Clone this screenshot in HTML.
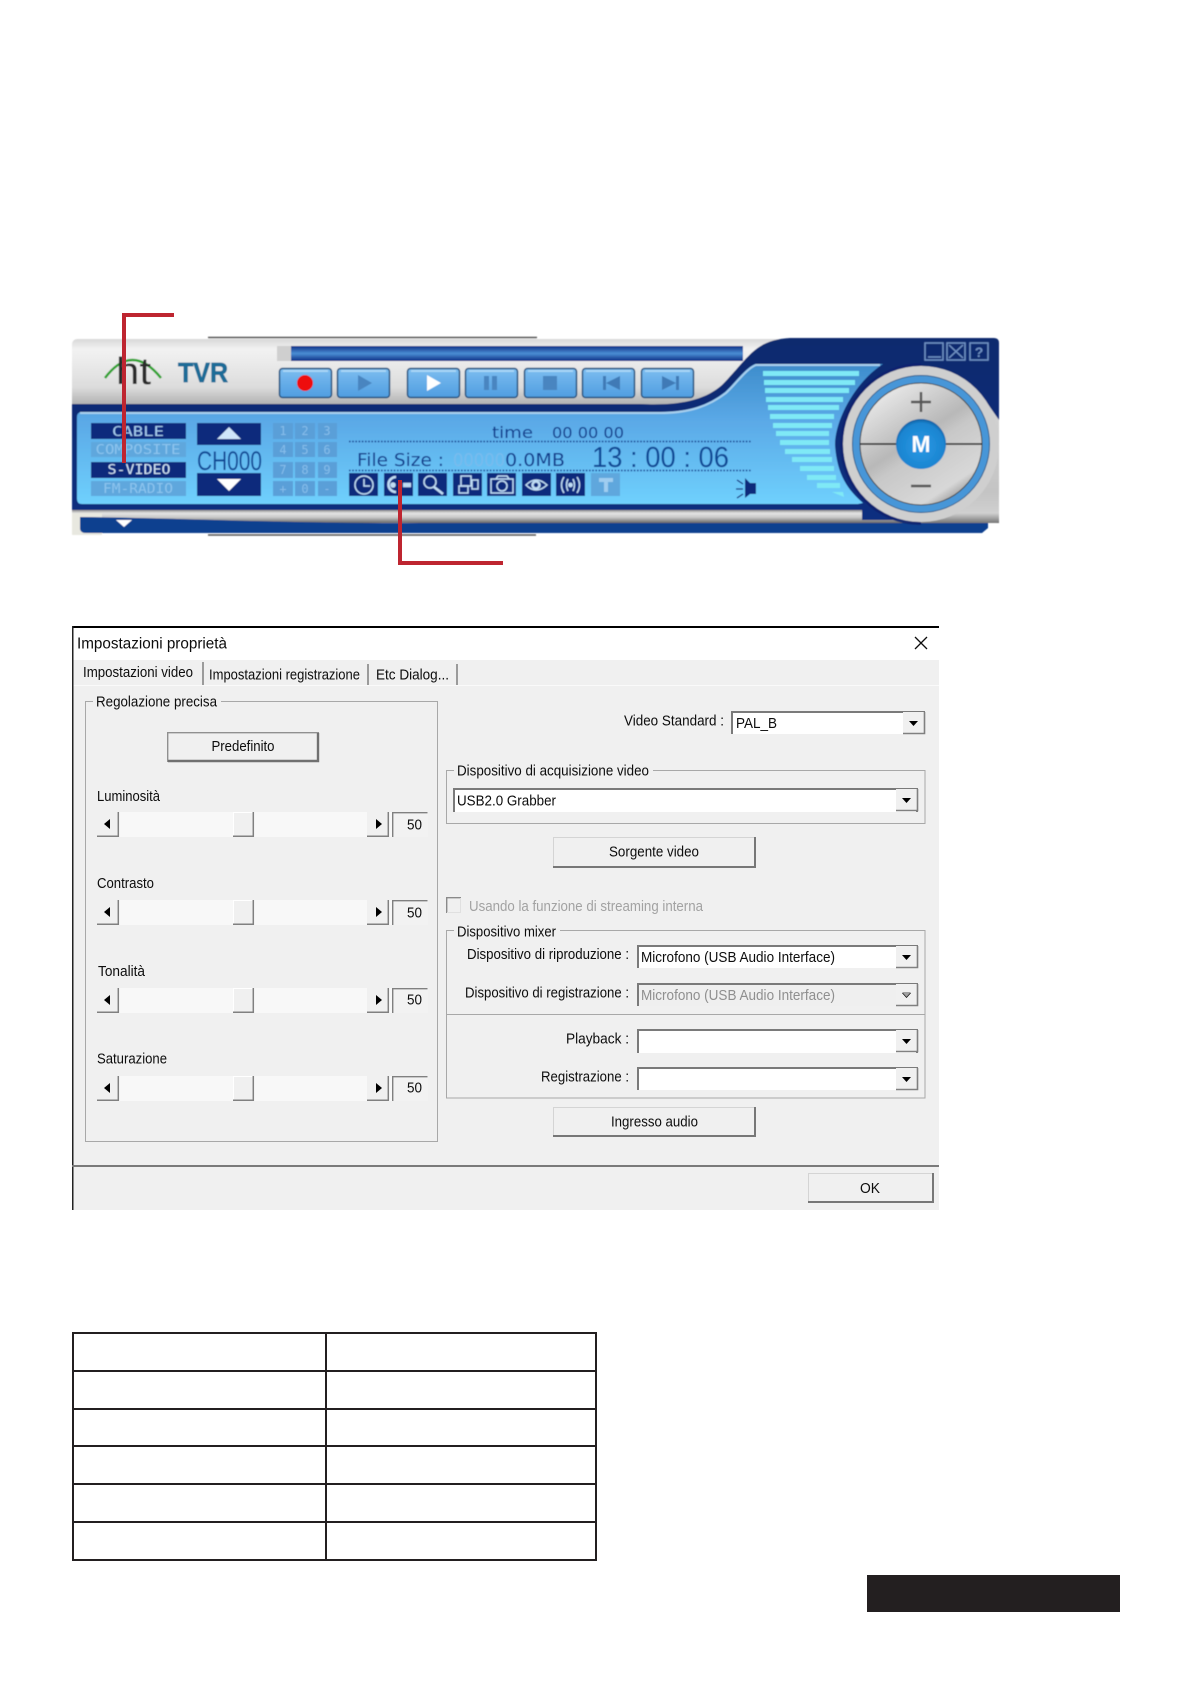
<!DOCTYPE html>
<html><head><meta charset="utf-8"><style>
html,body{margin:0;padding:0;background:#fff}
svg{display:block}
.t{font-family:"Liberation Sans",sans-serif;font-size:14.5px;fill:#0c0c0c;transform:translateY(-0.8px)}
.m{font-family:"DejaVu Sans Mono","Liberation Mono",monospace;font-size:13px}
.s{font-family:"DejaVu Sans","Liberation Sans",sans-serif;fill:#0b3a8c}
</style></head><body>
<svg width="1191" height="1684" viewBox="0 0 1191 1684" xmlns="http://www.w3.org/2000/svg">
<defs>
<linearGradient id="sil" x1="0" y1="0" x2="0" y2="1"><stop offset="0" stop-color="#d8d8d8"/><stop offset=".15" stop-color="#f2f2f2"/><stop offset=".7" stop-color="#dcdcdc"/><stop offset="1" stop-color="#a8a8a8"/></linearGradient>
<linearGradient id="sil2" x1="0" y1="0" x2="0" y2="1"><stop offset="0" stop-color="#777"/><stop offset=".3" stop-color="#e4e4e4"/><stop offset=".6" stop-color="#c8c8c8"/><stop offset="1" stop-color="#666"/></linearGradient>
<linearGradient id="sil3" x1="0" y1="0" x2="0" y2="1"><stop offset="0" stop-color="#d4d4d4"/><stop offset=".75" stop-color="#c4c4c4"/><stop offset=".92" stop-color="#d0d0d0"/><stop offset="1" stop-color="#777"/></linearGradient>
<linearGradient id="nav" x1="0" y1="0" x2="0" y2="1"><stop offset="0" stop-color="#0c2a6e"/><stop offset="1" stop-color="#0b2f80"/></linearGradient>
<linearGradient id="pan" gradientUnits="userSpaceOnUse" x1="0" y1="363" x2="0" y2="503"><stop offset="0" stop-color="#3d8ccb"/><stop offset=".4" stop-color="#5aa8e6"/><stop offset="1" stop-color="#6fd0fd"/></linearGradient>
<linearGradient id="prog" x1="0" y1="0" x2="0" y2="1"><stop offset="0" stop-color="#0e2f86"/><stop offset=".5" stop-color="#4a8fd4"/><stop offset="1" stop-color="#0e2f86"/></linearGradient>
<linearGradient id="btn" x1="0" y1="0" x2="0" y2="1"><stop offset="0" stop-color="#7dbdf0"/><stop offset="1" stop-color="#4f9de0"/></linearGradient>
<linearGradient id="disc" gradientUnits="userSpaceOnUse" x1="880" y1="383" x2="960" y2="505"><stop offset="0" stop-color="#f0f0f0"/><stop offset=".45" stop-color="#b8b8b8"/><stop offset=".55" stop-color="#c8c8c8"/><stop offset=".85" stop-color="#d8d8d8"/><stop offset="1" stop-color="#808080"/></linearGradient>
<radialGradient id="mb" cx=".5" cy=".55" r=".55"><stop offset="0" stop-color="#2a9ae6"/><stop offset=".85" stop-color="#1a84d0"/><stop offset="1" stop-color="#0c5c9c"/></radialGradient>
<clipPath id="lh"><rect x="800" y="330" width="121" height="200"/></clipPath>
<filter id="b" x="-2%" y="-2%" width="104%" height="104%"><feGaussianBlur stdDeviation="0.55"/></filter>
<filter id="b2" x="-2%" y="-2%" width="104%" height="104%"><feGaussianBlur stdDeviation="0.32"/></filter>
<g id="pb"><rect x=".5" y=".5" width="52" height="29" rx="3" fill="url(#btn)" stroke="#24527f" stroke-width="1.5"/><rect x="4" y="2" width="45" height="2" fill="#a9d6f6"/></g>
<g id="ca"><rect width="21" height="22" fill="#f0f0f0"/><path d="M0,21.5H21.5V0" fill="none" stroke="#808080" stroke-width="1.6"/><path d="M6,9h9l-4.5,5z" fill="#000"/></g>
<g id="sc">
<rect x="97" y="0" width="331" height="25" fill="#f8f8f8"/>
<rect x="97" y="0" width="22" height="25" fill="#f0f0f0"/><path d="M97,24.3H118.3V0" fill="none" stroke="#808080" stroke-width="1.5"/><path d="M110,7v10l-6,-5z" fill="#000"/>
<rect x="233" y="0" width="21" height="25" fill="#f0f0f0"/><path d="M233.5,24V.5H253" fill="none" stroke="#fff"/><path d="M233,24.3H253.3V0" fill="none" stroke="#808080" stroke-width="1.5"/>
<rect x="367" y="0" width="22" height="25" fill="#f0f0f0"/><path d="M367,24.3H388.3V0" fill="none" stroke="#808080" stroke-width="1.5"/><path d="M376,7v10l6,-5z" fill="#000"/>
<rect x="392" y="0" width="36" height="25" fill="#f2f2f2"/><path d="M392.7,25V.7H427.5" fill="none" stroke="#808080" stroke-width="1.4"/>
</g>
</defs>
<rect width="1191" height="1684" fill="#fff"/>

<g filter="url(#b)">
<path d="M208,337.5H537M208,535H536" stroke="#555" stroke-width="1.5"/>
<!-- silver top -->
<path d="M78,339H795V408H72V345Q72,339 78,339Z" fill="url(#sil)"/>
<rect x="72" y="509" width="927" height="14" fill="url(#sil2)"/>
<rect x="72" y="513" width="30" height="22" fill="#e8e8e0"/>
<path d="M80,517C180,518 300,524 420,523H988V528L982,533H86Q80,533 80,528Z" fill="#0b3f8f"/>
<path d="M116,520h16l-8,7z" fill="#fff"/>
<!-- navy -->
<path d="M72,404H640C680,406 705,400 722,385C735,372 745,358 755,350C765,342 775,339 790,338H994Q999,338 999,343V520H862V510H72Z" fill="url(#nav)"/>
<!-- panel -->
<path d="M82,412H660C690,412 708,405 725,392C735,383 745,368 755,364H883C855,382 835,420 835,445C837,475 848,490 863,503L858,504H82Q77,504 77,499V417Q77,412 82,412Z" fill="url(#pan)"/>
<path d="M80,413H660C690,413 709,406 726,393C736,384 746,369 756,365H880" fill="none" stroke="#a8d0ee" stroke-width="2"/>
<!-- volume bars -->
<g fill="#7fe9f6">
<rect x="763" y="371" width="96" height="5"/><rect x="764" y="380" width="91" height="5"/><rect x="765" y="388" width="84" height="5"/><rect x="766" y="397" width="77" height="5"/><rect x="768" y="405" width="71" height="5"/><rect x="770" y="414" width="64" height="5"/><rect x="773" y="423" width="59" height="5"/><rect x="776" y="431" width="53" height="5"/><rect x="780" y="440" width="49" height="5"/><rect x="785" y="449" width="45" height="5"/><rect x="792" y="457" width="40" height="5"/><rect x="800" y="466" width="34" height="5"/><rect x="807" y="475" width="29" height="5"/><rect x="817" y="483" width="23" height="5"/><path d="M832,492H843L844,497Z"/>
</g>
<!-- right silver + knob -->
<circle cx="921" cy="444" r="81" fill="#0a2470" opacity=".9" clip-path="url(#lh)"/>
<path d="M921,444L985,400L999,420V519Q999,523 995,523H921Z" fill="url(#sil3)"/>
<circle cx="921" cy="444" r="78" fill="#cfcfcf"/>
<circle cx="921" cy="444" r="64.5" fill="none" stroke="#4696d8" stroke-width="7"/>
<circle cx="921" cy="444" r="68.5" fill="none" stroke="#235a8e" stroke-width="1"/>
<circle cx="921" cy="444" r="61" fill="url(#disc)" stroke="#444" stroke-width="1"/>
<path d="M860,444H982" stroke="#111" stroke-width="1.5"/>
<circle cx="921" cy="444" r="25" fill="url(#mb)"/>
<path d="M911,402H931M921,392V412M911,486H931" stroke="#555" stroke-width="2.4"/>
<text x="921" y="452" text-anchor="middle" font-family="Liberation Sans,sans-serif" font-weight="700" font-size="23" fill="#fff">M</text>
<!-- window buttons -->
<g fill="none" stroke="#6f92c4" stroke-width="1.5"><rect x="925" y="343" width="18" height="17"/><rect x="947" y="343" width="18" height="17"/><rect x="970" y="343" width="18" height="17"/><path d="M928,357H941M949,345L963,358M963,345L949,358"/></g>
<text x="979" y="357" text-anchor="middle" font-family="Liberation Sans,sans-serif" font-weight="700" font-size="14" fill="#6f92c4">?</text>
<!-- progress -->
<rect x="277" y="346" width="466" height="15" fill="url(#prog)"/><rect x="277" y="346" width="14" height="15" fill="#cfcfcf"/>
<!-- logo -->
<path d="M105,378Q132,342 161,378" fill="none" stroke="#2fa32f" stroke-width="2.5"/>
<text x="116" y="384" textLength="35" lengthAdjust="spacingAndGlyphs" font-family="Liberation Sans,sans-serif" font-size="38" fill="#2b2b2b">ht</text>
<text x="178" y="382" textLength="50" lengthAdjust="spacingAndGlyphs" font-family="Liberation Sans,sans-serif" font-weight="700" font-size="28" fill="#1f6c97" stroke="#1f6c97" stroke-width=".7">TVR</text>
<!-- play buttons -->
<use href="#pb" x="279" y="368"/><use href="#pb" x="337" y="368"/><use href="#pb" x="407" y="368"/><use href="#pb" x="465" y="368"/><use href="#pb" x="524" y="368"/><use href="#pb" x="582" y="368"/><use href="#pb" x="641" y="368"/>
<circle cx="305" cy="383" r="8" fill="#ee0a0a"/>
<path d="M358,375V391L372,383Z" fill="#4a85c0"/>
<path d="M427,375V391L441,383Z" fill="#fff"/>
<path d="M484,376h5v14h-5zM492,376h5v14h-5z" fill="#4a85c0"/>
<rect x="543" y="376" width="14" height="14" fill="#4a85c0"/>
<path d="M603,376h3v14h-3zM620,376V390L606,383Z" fill="#3f7ab6"/>
<path d="M662,376V390L676,383ZM676,376h3v14h-3z" fill="#3f7ab6"/>
<!-- source list -->
<rect x="91" y="423" width="95" height="16" fill="#0a2a7c"/><rect x="91" y="442" width="95" height="15" fill="#5fa7dd"/><rect x="91" y="462" width="95" height="16" fill="#0a2a7c"/><rect x="91" y="481" width="95" height="15" fill="#5fa7dd"/>
<g class="m" text-anchor="middle">
<text x="138" y="436" textLength="52" lengthAdjust="spacingAndGlyphs" fill="#a6cdf0">CABLE</text>
<text x="138" y="454" textLength="85" lengthAdjust="spacingAndGlyphs" fill="#8cc4ee">COMPOSITE</text>
<text x="139" y="474" textLength="63" lengthAdjust="spacingAndGlyphs" fill="#d0e4f6">S-VIDEO</text>
<text x="138" y="493" textLength="70" lengthAdjust="spacingAndGlyphs" fill="#8cc4ee">FM-RADIO</text>
</g>
<!-- channel -->
<rect x="197" y="423" width="64" height="22" fill="#0a2a7c"/><rect x="197" y="473" width="64" height="23" fill="#0a2a7c"/>
<path d="M217,439L229,427L241,439Z" fill="#cfe6fa"/><path d="M217,479L229,491L241,479Z" fill="#fff"/>
<text x="197" y="470" textLength="65" lengthAdjust="spacingAndGlyphs" font-family="Liberation Sans,sans-serif" font-size="27" fill="#0f4a96">CH000</text>
<!-- keypad -->
<g fill="#5a9fd8">
<rect x="273" y="423" width="20" height="16"/><rect x="295" y="423" width="20" height="16"/><rect x="318" y="423" width="19" height="16"/>
<rect x="273" y="442" width="20" height="15"/><rect x="295" y="442" width="20" height="15"/><rect x="318" y="442" width="19" height="15"/>
<rect x="273" y="462" width="20" height="16"/><rect x="295" y="462" width="20" height="16"/><rect x="318" y="462" width="19" height="16"/>
<rect x="273" y="481" width="20" height="15"/><rect x="295" y="481" width="20" height="15"/><rect x="318" y="481" width="19" height="15"/>
</g>
<g class="m" text-anchor="middle" fill="#86bdea" style="font-size:12px">
<text x="283" y="435">1</text><text x="305" y="435">2</text><text x="327" y="435">3</text>
<text x="283" y="454">4</text><text x="305" y="454">5</text><text x="327" y="454">6</text>
<text x="283" y="474">7</text><text x="305" y="474">8</text><text x="327" y="474">9</text>
<text x="283" y="493">+</text><text x="305" y="493">0</text><text x="327" y="493">-</text>
</g>
<!-- LCD -->
<path d="M349,441.5H751M349,470.5H751" stroke="#0b3a8c" stroke-width="1.6" stroke-dasharray="1.6 1.6"/>
<text class="s" x="492" y="438" textLength="41" lengthAdjust="spacingAndGlyphs" font-size="16">time</text>
<text class="s" x="552" y="438" textLength="72" lengthAdjust="spacingAndGlyphs" font-size="15">00 00 00</text>
<text class="s" x="357" y="466" textLength="87" lengthAdjust="spacingAndGlyphs" font-size="18">File Size :</text>
<text class="s" x="453" y="466" textLength="52" lengthAdjust="spacingAndGlyphs" font-size="18" style="fill:#78bbee">00000</text>
<text class="s" x="505" y="466" textLength="60" lengthAdjust="spacingAndGlyphs" font-size="18">0.0MB</text>
<text x="592" y="467" textLength="137" lengthAdjust="spacingAndGlyphs" font-family="Liberation Sans,sans-serif" font-size="29" fill="#0f4a96">13 : 00 : 06</text>
<!-- icon boxes -->
<g fill="#0a2a7c"><rect x="349" y="473" width="29" height="23"/><rect x="384" y="473" width="29" height="23"/><rect x="418" y="473" width="29" height="23"/><rect x="453" y="473" width="29" height="23"/><rect x="487" y="473" width="29" height="23"/><rect x="522" y="473" width="29" height="23"/><rect x="556" y="473" width="29" height="23"/></g>
<rect x="591" y="473" width="29" height="23" fill="#5fa7dd"/>
<g fill="none" stroke="#bfdcf4" stroke-width="1.5">
<circle cx="364" cy="485" r="9"/><path d="M364,479V486H370"/>
<path d="M396,477A7.5,7.5 0 1 0 396,492" stroke-width="2.6"/><circle cx="393" cy="485" r="2" fill="#bfdcf4"/><path d="M403,485H411" stroke-width="4.5"/>
<circle cx="430" cy="482" r="6"/><path d="M434,487L443,494" stroke-width="2.5"/>
<rect x="461" y="476" width="10" height="10"/><rect x="459" y="486" width="9" height="7"/><rect x="472" y="480" width="6" height="9"/>
<rect x="491" y="479" width="22" height="14"/><circle cx="502" cy="486" r="5"/><path d="M496,479L498,476H507L509,479"/>
<path d="M526,485Q536,475 547,485Q536,495 526,485Z"/><circle cx="536" cy="485" r="3.5" stroke-width="2.5"/>
<path d="M564,477Q559,485 564,493M577,477Q582,485 577,493M568,479Q565,485 568,491M573,479Q576,485 573,491"/><circle cx="570.5" cy="485" r="1.6" fill="#bfdcf4"/>
</g>
<path d="M599,478H613V482H608V492H604V482H599Z" fill="#9fcdf0"/>
<path d="M745,478L750,483H756V494H750L745,498Z" fill="#0a2a7c"/>
<path d="M737,480L743,484M736,489H743M737,498L743,494" stroke="#0a2a7c" stroke-width="1.3"/>
</g>

<!-- red callouts -->
<g fill="#be2530">
<rect x="122" y="313" width="52" height="4"/><rect x="122" y="313" width="4" height="150"/>
<rect x="398" y="480" width="4" height="85"/><rect x="398" y="561" width="105" height="4"/>
</g>

<!-- dialog -->
<g filter="url(#b2)">
<rect x="72" y="627" width="867" height="583" fill="#f0f0f0"/>
<rect x="72" y="627" width="867" height="33" fill="#fff"/>
<rect x="72" y="685" width="867" height="1" fill="#fafafa"/>
<rect x="72" y="626" width="867" height="2" fill="#000"/>
<rect x="72" y="626" width="1.5" height="584" fill="#222"/>
<text class="t" x="77" y="649.5" textLength="150" lengthAdjust="spacingAndGlyphs" style="font-size:15.5px">Impostazioni proprietà</text>
<path d="M915,637L927,649M927,637L915,649" stroke="#111" stroke-width="1.3"/>
<!-- tabs -->
<path d="M203,662V685M368,664V685M457,664V685" stroke="#777" stroke-width="1.4"/>
<text class="t" x="83" y="678" textLength="110" lengthAdjust="spacingAndGlyphs">Impostazioni video</text>
<text class="t" x="209" y="680.5" textLength="151" lengthAdjust="spacingAndGlyphs">Impostazioni registrazione</text>
<text class="t" x="376" y="680.5" textLength="73" lengthAdjust="spacingAndGlyphs">Etc Dialog...</text>
<!-- group left -->
<rect x="85.5" y="701.5" width="352" height="440" fill="none" stroke="#a8a8a8" stroke-width="1"/>
<rect x="93" y="693" width="128" height="16" fill="#f0f0f0"/>
<text class="t" x="96" y="707.5" textLength="121" lengthAdjust="spacingAndGlyphs">Regolazione precisa</text>
<rect x="167" y="732" width="152" height="30" fill="#f0f0f0"/>
<path d="M167.7,762V732.7H319" fill="none" stroke="#909090" stroke-width="1.4"/><path d="M168,761H318V733" fill="none" stroke="#707070" stroke-width="2.4"/>
<text class="t" x="243" y="752" text-anchor="middle" textLength="63" lengthAdjust="spacingAndGlyphs">Predefinito</text>
<text class="t" x="97" y="802" textLength="63" lengthAdjust="spacingAndGlyphs">Luminosità</text>
<text class="t" x="97" y="889" textLength="57" lengthAdjust="spacingAndGlyphs">Contrasto</text>
<text class="t" x="98" y="977" textLength="47" lengthAdjust="spacingAndGlyphs">Tonalità</text>
<text class="t" x="97" y="1064.5" textLength="70" lengthAdjust="spacingAndGlyphs">Saturazione</text>
<use href="#sc" y="812"/><use href="#sc" y="900"/><use href="#sc" y="988"/><use href="#sc" y="1076"/>
<text class="t" x="407" y="830.5" textLength="15" lengthAdjust="spacingAndGlyphs">50</text>
<text class="t" x="407" y="918.5" textLength="15" lengthAdjust="spacingAndGlyphs">50</text>
<text class="t" x="407" y="1005.5" textLength="15" lengthAdjust="spacingAndGlyphs">50</text>
<text class="t" x="407" y="1093.5" textLength="15" lengthAdjust="spacingAndGlyphs">50</text>
<!-- right -->
<text class="t" x="624" y="726.5" textLength="100" lengthAdjust="spacingAndGlyphs">Video Standard :</text>
<rect x="731" y="711" width="193" height="23" fill="#fff"/><path d="M732,734V712H924V734" fill="none" stroke="#7a7a7a" stroke-width="2"/>
<use href="#ca" x="903" y="712"/>
<text class="t" x="736" y="729" textLength="41" lengthAdjust="spacingAndGlyphs">PAL_B</text>

<rect x="446.5" y="770.5" width="478.5" height="53" fill="none" stroke="#a8a8a8"/>
<rect x="454" y="762" width="199" height="16" fill="#f0f0f0"/>
<text class="t" x="457" y="776.5" textLength="192" lengthAdjust="spacingAndGlyphs">Dispositivo di acquisizione video</text>
<rect x="453" y="788" width="464" height="24" fill="#fff"/><path d="M454,812V789H917V812" fill="none" stroke="#7a7a7a" stroke-width="2"/>
<use href="#ca" x="896" y="789"/>
<text class="t" x="457" y="806.5" textLength="99" lengthAdjust="spacingAndGlyphs">USB2.0 Grabber</text>

<rect x="553" y="837" width="203" height="31" fill="#f0f0f0"/><path d="M553.5,868V837.5H755" fill="none" stroke="#d4d4d4"/><path d="M553,867H755V837" fill="none" stroke="#777" stroke-width="2"/>
<text class="t" x="609" y="857.5" textLength="90" lengthAdjust="spacingAndGlyphs">Sorgente video</text>

<rect x="446" y="897" width="15" height="16" fill="#f0f0f0"/><path d="M446.7,913V897.7H461" fill="none" stroke="#8a8a8a" stroke-width="1.4"/><path d="M447,912.5H460.5V898" fill="none" stroke="#e0e0e0"/>
<text class="t" x="469" y="912" textLength="234" lengthAdjust="spacingAndGlyphs" style="fill:#a2a2a2">Usando la funzione di streaming interna</text>

<rect x="446.5" y="930.5" width="478.5" height="167.5" fill="none" stroke="#a8a8a8"/>
<path d="M447,1014.5H925" stroke="#a8a8a8"/>
<rect x="454" y="922" width="106" height="16" fill="#f0f0f0"/>
<text class="t" x="457" y="937.5" textLength="99" lengthAdjust="spacingAndGlyphs">Dispositivo mixer</text>

<text class="t" x="467" y="960" textLength="162" lengthAdjust="spacingAndGlyphs">Dispositivo di riproduzione :</text>
<text class="t" x="465" y="998.5" textLength="164" lengthAdjust="spacingAndGlyphs">Dispositivo di registrazione :</text>
<text class="t" x="566" y="1044.5" textLength="63" lengthAdjust="spacingAndGlyphs">Playback :</text>
<text class="t" x="541" y="1082.5" textLength="88" lengthAdjust="spacingAndGlyphs">Registrazione :</text>

<rect x="637" y="945" width="280" height="23" fill="#fff"/><path d="M638,968V946H917V968" fill="none" stroke="#7a7a7a" stroke-width="2"/><use href="#ca" x="896" y="946"/>
<rect x="637" y="983" width="280" height="23" fill="#efefef"/><path d="M638,1006V984H917V1006" fill="none" stroke="#7a7a7a" stroke-width="2"/><use href="#ca" x="896" y="984"/><path d="M902,992h9l-4.5,5z" fill="#a0a0a0"/>
<rect x="637" y="1029" width="280" height="24" fill="#fff"/><path d="M638,1053V1030H917V1053" fill="none" stroke="#7a7a7a" stroke-width="2"/><use href="#ca" x="896" y="1030"/>
<rect x="637" y="1067" width="280" height="23" fill="#fff"/><path d="M638,1090V1068H917V1090" fill="none" stroke="#7a7a7a" stroke-width="2"/><use href="#ca" x="896" y="1068"/>
<text class="t" x="641" y="963" textLength="194" lengthAdjust="spacingAndGlyphs">Microfono (USB Audio Interface)</text>
<text class="t" x="641" y="1001" textLength="194" lengthAdjust="spacingAndGlyphs" style="fill:#8f8f8f">Microfono (USB Audio Interface)</text>

<rect x="553" y="1107" width="203" height="30" fill="#f0f0f0"/><path d="M553.5,1137V1107.5H755" fill="none" stroke="#d4d4d4"/><path d="M553,1136H755V1107" fill="none" stroke="#777" stroke-width="2"/>
<text class="t" x="611" y="1127.5" textLength="87" lengthAdjust="spacingAndGlyphs">Ingresso audio</text>

<rect x="72" y="1165" width="867" height="2" fill="#7a7a7a"/>
<rect x="808" y="1173" width="126" height="30" fill="#f0f0f0"/><path d="M808.5,1203V1173.5H933" fill="none" stroke="#d4d4d4"/><path d="M808,1202H933V1173" fill="none" stroke="#777" stroke-width="2"/>
<text class="t" x="860" y="1194" textLength="20" lengthAdjust="spacingAndGlyphs" style="font-size:15px">OK</text>
</g>

<!-- table -->
<g fill="none" stroke="#231f20">
<rect x="73" y="1333" width="523" height="227" stroke-width="2"/>
<path d="M326,1333V1560" stroke-width="2"/>
<path d="M73,1371H596M73,1409H596M73,1446H596M73,1484H596M73,1522H596" stroke-width="2"/>
</g>
<rect x="871" y="1575" width="253" height="37" fill="#231f20" transform="translate(-4,0)"/>
</svg>
</body></html>
